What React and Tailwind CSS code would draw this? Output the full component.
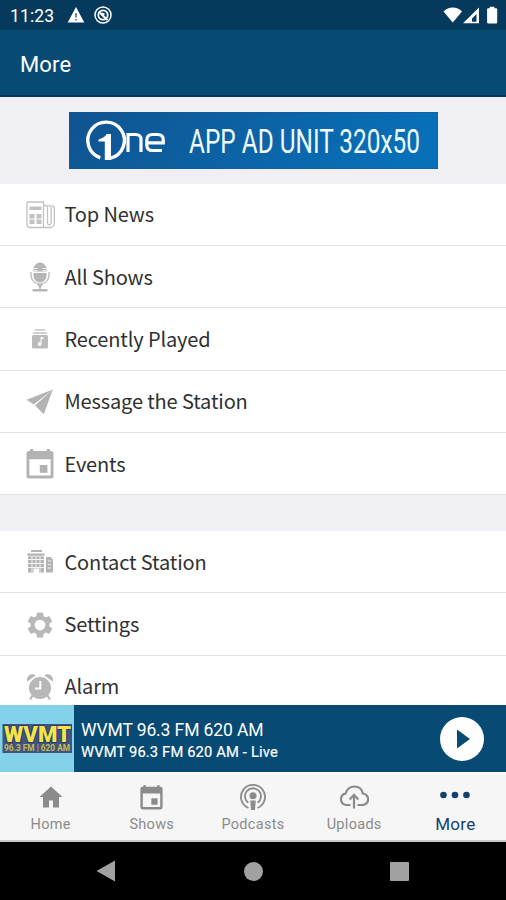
const MENU_FONT = "font-['Noto_Sans_CJK_SC',sans-serif]";

function NewsIcon() {
  return (
    <svg width="32" height="32" viewBox="0 0 32 32" fill="none" stroke="#c2c2c2" strokeWidth="1.3">
      <path d="M3 3h16.500v25.500H6a3 3 0 0 1-3-3z" />
      <path d="M19.500 6.500h2.500a1.500 1.500 0 0 1 1.500 1.500v16a1.800 1.800 0 0 0 3.600 0V8" />
      <path d="M23.500 6.800h4a2.800 2.800 0 0 1 2.800 2.800v14.900a4 4 0 0 1-4 4H19" />
      <g fill="#c2c2c2" stroke="none">
        <rect x="5.500" y="7.500" width="12" height="3.500" />
        <rect x="5.500" y="15" width="5" height="4.500" /><rect x="12.500" y="15" width="5" height="4.500" />
        <rect x="5.500" y="20.500" width="5" height="4.500" /><rect x="12.500" y="20.500" width="5" height="4.500" />
      </g>
    </svg>
  );
}

function MicIcon() {
  return (
    <svg width="32" height="32" viewBox="0 0 32 32" fill="#b6b6b6">
      <path d="M9.500 10.500V8a6.500 6.500 0 0 1 13 0v2.500zM9.500 12h13v3a6.500 6.500 0 0 1-13 0z" />
      <path d="M9.500 7.500h4M9.500 9.800h4M18.500 7.500h4M18.500 9.800h4" stroke="#fff" strokeWidth=".8" />
      <path d="M7 11v3.500a9 8.500 0 0 0 18 0V11" fill="none" stroke="#c4c4c4" strokeWidth="1.500" />
      <path d="M13 23.300h6L16 27.500z" />
      <path d="M15.300 25h1.400v4h-1.400zM8.500 28h15v2.500h-15z" />
    </svg>
  );
}

function RecentIcon() {
  return (
    <svg width="32" height="32" viewBox="0 0 32 32" fill="#bbb">
      <path d="M10.500 6h11v1.800h-11zM9 9h14v2H9z" fill="#cfcfcf" />
      <rect x="8" y="12" width="16" height="13.500" rx="1.500" />
      <path d="M16.500 14h3v2.300h-1.800v4.500a2 2 0 1 1-1.200-1.700z" fill="#f4f4f4" />
    </svg>
  );
}

function SendIcon() {
  return (
    <svg width="32" height="32" viewBox="0 0 32 32" fill="#b3b3b3">
      <path d="M28.800 3.500 2.600 13.700l7.200 4.800zM28.800 3.500 11 19.500l8.800 8.800z" />
    </svg>
  );
}

function CalendarIcon({ className }) {
  return (
    <svg className={className} viewBox="0 0 28 30" fill="currentColor">
      <path fillRule="evenodd" d="M4 0h3.200v2h13.600V0H24v2h1a2.500 2.500 0 0 1 2.500 2.500v22.500A2.500 2.500 0 0 1 25 29.500H3A2.500 2.500 0 0 1 .5 27V4.500A2.500 2.500 0 0 1 3 2h1zM3.400 10.200v16.400h21.200V10.200z" />
      <rect x="13.800" y="16" width="7.600" height="7.800" />
    </svg>
  );
}

function BuildingIcon() {
  return (
    <svg width="32" height="32" viewBox="0 0 32 32" fill="#b4b4b4">
      <path d="M7 4h11v1.900H7zM3.300 7.500h17.400v2.300H3.300zM4 10.500h16v16h-5v-4H9.500v4H4zM22 11h5.500v2H29v13.500h-7z" />
      <path d="M4 13.500h16M4 17.500h16M4 21.500h16M8 11v15M12 11v11M16 11v15M24 15h3M24 18.500h3M24 22h3" stroke="#fff" strokeWidth=".8" fill="none" />
    </svg>
  );
}

function GearIcon() {
  return (
    <svg width="30" height="30" viewBox="0 0 24 24" fill="#b8b8b8">
      <path d="M19.430 12.980c.04-.32.070-.64.070-.98s-.03-.66-.07-.98l2.110-1.650c.19-.15.240-.42.120-.64l-2-3.460c-.12-.22-.39-.3-.61-.22l-2.490 1c-.52-.4-1.080-.73-1.690-.98l-.38-2.650C14.460 2.180 14.250 2 14 2h-4c-.25 0-.46.180-.49.420l-.38 2.650c-.61.250-1.170.590-1.690.980l-2.490-1c-.23-.09-.49 0-.61.220l-2 3.460c-.13.220-.07.490.120.640l2.110 1.650c-.04.320-.07.650-.07.980s.030.660.070.980l-2.110 1.650c-.19.150-.24.420-.12.640l2 3.460c.12.220.39.300.61.220l2.490-1c.52.400 1.080.730 1.690.980l.38 2.650c.03.240.240.420.490.420h4c.25 0 .46-.18.490-.42l.38-2.650c.61-.25 1.170-.59 1.690-.98l2.490 1c.23.090.49 0 .61-.22l2-3.460c.12-.22.070-.49-.12-.64zM12 16.300a4.300 4.300 0 1 1 0-8.600 4.300 4.300 0 0 1 0 8.600z" />
    </svg>
  );
}

function AlarmIcon() {
  return (
    <svg width="32" height="32" viewBox="0 0 32 32" fill="#b7b7b7">
      <circle cx="16" cy="17" r="11" />
      <path d="M3.500 10.500C1.500 6 7 1 11.500 4.500zM28.500 10.500C30.500 6 25 1 20.500 4.500z" />
      <path d="m9 24-3 4.500M23 24l3 4.500" stroke="#b7b7b7" strokeWidth="2.200" />
      <path d="M16.300 10v7.500H11" stroke="#fff" strokeWidth="2" fill="none" />
    </svg>
  );
}

function MenuRow({ icon, label }) {
  return (
    <div className="flex h-[62.400px] shrink-0 items-center border-b border-[#e2e2e4] bg-white pl-[23.500px]">
      <span className="flex w-8 justify-center pt-px">{icon}</span>
      <span className={`ml-[9px] whitespace-nowrap text-[20px] leading-[30px] tracking-[-0.14px] text-[#303030] ${MENU_FONT}`}>{label}</span>
    </div>
  );
}

function StatusBar() {
  return (
    <div className="flex h-[30px] shrink-0 items-center bg-[#053a5c] pl-[10px] text-white">
      <span className="mt-[2px] w-[44px] whitespace-nowrap text-[17.500px] tracking-[0.15px]">11:23</span>
      <svg className="ml-[13px]" width="18" height="18" viewBox="0 0 18 18">
        <path d="M9 1 17.300 16.500H.7z" fill="#fff" />
        <path d="M8.200 7h1.600v4.500H8.200zM8.200 13h1.600v1.600H8.200z" fill="#456e88" />
      </svg>
      <svg className="ml-[9px]" width="18" height="18" viewBox="0 0 18 18" fill="none" stroke="#fff">
        <circle cx="9" cy="9" r="8" strokeWidth="1.500" />
        <circle cx="9" cy="9" r="4.700" strokeWidth="1.800" />
        <path d="m5.500 7 5 1.500M7 8l6.500 6" strokeWidth="1.900" />
      </svg>
      <svg className="ml-auto mr-[7px]" width="56" height="20" viewBox="0 0 56 20" fill="#fff">
        <path d="M.5 6.500C5.500 1 14 1 19 6.500L9.800 17.500z" />
        <path fillRule="evenodd" d="M36 2.500v15.700H20zM33.500 9 29 13.500v3.200h4.500z" />
        <path d="M46.800 3.200v-1.500h4.600v1.500h1.800a1 1 0 0 1 1 1v13.300a1 1 0 0 1-1 1h-8.100a1 1 0 0 1-1-1V4.200a1 1 0 0 1 1-1z" />
      </svg>
    </div>
  );
}

function AdBanner() {
  return (
    <div className="flex h-[86.500px] shrink-0 items-start bg-[#f0eff4] pl-[69px] pt-[15px]">
      <svg width="369" height="57" viewBox="0 0 369 57">
        <defs>
          <linearGradient id="ad" x1="0" x2="1" y1="0" y2=".15"><stop stopColor="#10538f" /><stop offset="1" stopColor="#0870b8" /></linearGradient>
        </defs>
        <rect width="369" height="57" fill="url(#ad)" stroke="#1459a0" strokeWidth="1" />
        <path d="M31.300 45.800A18.300 18.300 0 1 1 41.500 46.200" fill="none" stroke="#fff" strokeWidth="3.400" />
        <path d="M29.500 27.500c4-1 7-3 8.200-5.500H42v26h-6.200V29.500h-6.300z" fill="#fff" />
        <path d="M59 40V22.500h7.500c4 0 5.500 1.500 5.500 5V40M93 38.500H83.500c-4 0-5.700-2-5.700-5.500v-4.500c0-4 1.900-6 5.600-6h5.100c4 0 5.800 1.900 5.800 5.400v2.900H79" fill="none" stroke="#fff" strokeWidth="3.200" />
        <text x="120" y="41" textLength="231" lengthAdjust="spacingAndGlyphs" fill="#effbff" fontFamily="Roboto, sans-serif" fontSize="33">APP AD UNIT 320x50</text>
      </svg>
    </div>
  );
}

function StationLogo() {
  return (
    <svg width="74" height="67" viewBox="0 0 74 67" className="shrink-0">
      <rect width="74" height="67" fill="#83d2ea" />
      <rect x="2.500" y="19" width="69.500" height="29" fill="#405577" />
      <text x="4" y="36.500" textLength="67" lengthAdjust="spacingAndGlyphs" fontFamily="Roboto, sans-serif" fontWeight="900" fontSize="22" fill="#f5e34a" stroke="#253f77" strokeWidth="2" paintOrder="stroke">WVMT</text>
      <text x="4" y="46" textLength="66" lengthAdjust="spacingAndGlyphs" fontFamily="Roboto, sans-serif" fontWeight="700" fontSize="9.500" fill="#c4bb58">96.3 FM | 620 AM</text>
    </svg>
  );
}

function Player() {
  return (
    <div className="flex h-[67px] shrink-0 items-center bg-[#074a74] text-white">
      <StationLogo />
      <div className="ml-[7px] whitespace-nowrap pt-[3px]">
        <div className="text-[17.500px] leading-[23px] tracking-[-0.1px]">WVMT 96.3 FM 620 AM</div>
        <div className="text-[14.700px] leading-[20px] tracking-[0.17px] [-webkit-text-stroke:0.2px_white]">WVMT 96.3 FM 620 AM - Live</div>
      </div>
      <svg width="44" height="44" viewBox="0 0 44 44" className="ml-auto mr-[22px]">
        <circle cx="22" cy="22" r="22" fill="#fff" />
        <path d="M17 12.500v19L30 22z" fill="#074a74" />
      </svg>
    </div>
  );
}

function Tab({ icon, label, active }) {
  return (
    <div className={`flex w-[101.200px] flex-col items-center ${active ? 'text-[#12416f]' : 'text-[#8b8b8b]'}`}>
      <div className="flex h-[42px] items-center pt-[4px]">{icon}</div>
      <span className={active ? 'text-[17px] leading-[16px] tracking-[0.3px]' : 'text-[14.500px] leading-[17px] tracking-[0.3px]'}>{label}</span>
    </div>
  );
}

function TabBar() {
  return (
    <div className="flex h-[70px] shrink-0 border-b-2 border-t-2 border-b-[#c9c9c9] border-t-white bg-[#f6f6f7]">
      <Tab label="Home" icon={
        <svg width="24" height="22" viewBox="0 0 24 22" fill="currentColor"><path d="M12 .5 23.500 11H20v10.500h-6v-7h-4v7H4V11H.5z" /></svg>
      } />
      <Tab label="Shows" icon={<CalendarIcon className="h-[25px] w-[23px]" />} />
      <Tab label="Podcasts" icon={
        <svg width="28" height="28" viewBox="0 0 28 28" fill="none" stroke="currentColor" strokeWidth="1.800">
          <path d="M9.500 25A12 12 0 1 1 18.500 25M9.300 19.700a8 8 0 1 1 9.400 0" />
          <circle cx="14" cy="12.800" r="3.500" fill="currentColor" stroke="none" />
          <path d="M11.200 17.500h5.600l-.8 9.500h-4z" fill="currentColor" stroke="none" />
        </svg>
      } />
      <Tab label="Uploads" icon={
        <svg width="30" height="24" viewBox="0 0 30 24" fill="none" stroke="currentColor" strokeWidth="2.200">
          <path d="M11.500 20H7A5.800 5.800 0 0 1 6.500 8.600C8 4 11.500 1.500 15.500 1.500c4.500 0 7.500 3 8.300 7A5.600 5.600 0 0 1 23 20h-4.500" />
          <path d="M15 23.500V11M10.700 14.500 15 9.800l4.300 4.700" />
        </svg>
      } />
      <Tab label="More" active icon={
        <svg width="30" height="8" viewBox="0 0 30 8" fill="currentColor" className="mb-[5px]"><circle cx="3.500" cy="4" r="3.300" /><circle cx="15" cy="4" r="3.300" /><circle cx="26.500" cy="4" r="3.300" /></svg>
      } />
    </div>
  );
}

export default function App() {
  return (
    <div className="flex h-[900px] w-[506px] flex-col overflow-hidden bg-black font-[Roboto,sans-serif]">
      <StatusBar />
      <header className="flex h-[67px] shrink-0 items-center border-b-2 border-[#063560] bg-[#074a74] pl-5 pt-[3px] text-[22px] tracking-[0.15px] text-white">More</header>
      <AdBanner />
      <main className="flex h-[521.500px] shrink-0 flex-col overflow-hidden bg-[#f0eff4]">
        <MenuRow icon={<NewsIcon />} label="Top News" />
        <MenuRow icon={<MicIcon />} label="All Shows" />
        <MenuRow icon={<RecentIcon />} label="Recently Played" />
        <MenuRow icon={<SendIcon />} label="Message the Station" />
        <MenuRow icon={<CalendarIcon className="h-[30px] w-[28px] text-[#b3b3b3]" />} label="Events" />
        <div className="h-[35.500px] shrink-0" />
        <MenuRow icon={<BuildingIcon />} label="Contact Station" />
        <MenuRow icon={<GearIcon />} label="Settings" />
        <MenuRow icon={<AlarmIcon />} label="Alarm" />
      </main>
      <Player />
      <TabBar />
      <nav className="flex h-[58px] shrink-0 items-center bg-black">
        <svg className="ml-[96px]" width="19" height="22" viewBox="0 0 19 22" fill="#a1a1a1"><path d="M19 .5v21L.5 11z" /></svg>
        <span className="ml-[129px] h-[19px] w-[19px] rounded-full bg-[#a1a1a1]" />
        <span className="ml-[127px] h-[19px] w-[19px] rounded-[1px] bg-[#a1a1a1]" />
      </nav>
    </div>
  );
}
